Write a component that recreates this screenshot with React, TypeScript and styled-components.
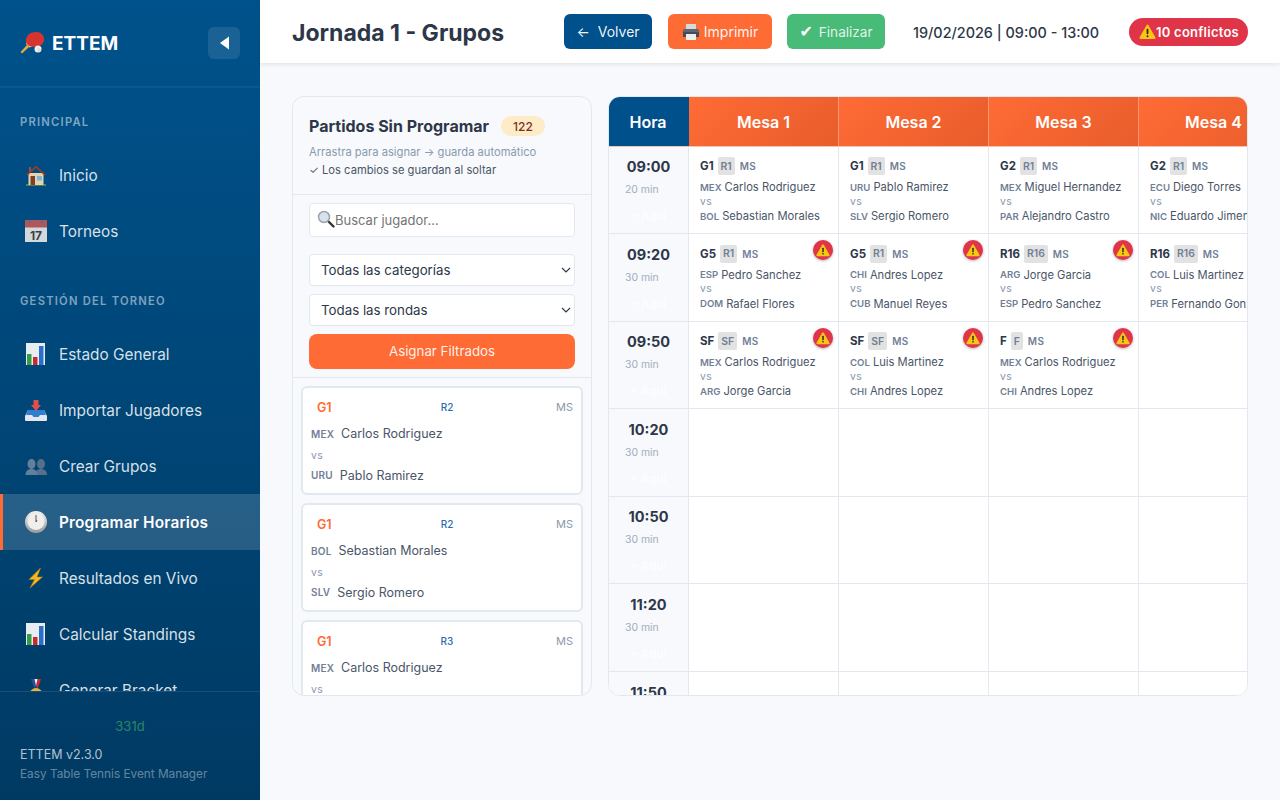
import React from 'react';
import styled, { createGlobalStyle } from 'styled-components';

const GlobalStyle = createGlobalStyle`
  * { box-sizing: border-box; }
  html, body { margin: 0; padding: 0; height: 100%; }
  body { font-family: Inter, "Liberation Sans", sans-serif; background: #f7f9fc; overflow: hidden; }
`;

const Layout = styled.div`
  display: flex;
  width: 1280px;
  height: 800px;
  overflow: hidden;
`;

const Sidebar = styled.aside`
  width: 260px;
  flex-shrink: 0;
  height: 800px;
  display: flex;
  flex-direction: column;
  background: linear-gradient(180deg, #00528c 0%, #003a63 100%);
`;
const SideHead = styled.div`
  height: 88px;
  flex-shrink: 0;
  display: flex;
  align-items: center;
  justify-content: space-between;
  padding: 0 20px;
  border-bottom: 2px solid rgba(255, 255, 255, 0.05);
`;
const Brand = styled.div`
  display: flex;
  align-items: center;
  gap: 6px;
  color: #fff;
  font-size: 19px;
  font-weight: 700;
`;
const Collapse = styled.button`
  width: 32px;
  height: 32px;
  border: 0;
  border-radius: 6px;
  background: rgba(255, 255, 255, 0.1);
  display: flex;
  align-items: center;
  justify-content: center;
  padding: 0;
`;
const Nav = styled.nav`
  flex: 1;
  overflow: hidden;
  padding-top: 25px;
`;
const SectionLabel = styled.div<{ $gap?: number }>`
  height: 19px;
  line-height: 19px;
  margin-top: ${(p) => p.$gap ?? 0}px;
  margin-bottom: 15px;
  padding-left: 20px;
  color: rgba(255, 255, 255, 0.5);
  font-size: 11.2px;
  font-weight: 600;
  letter-spacing: 1.24px;
`;
const NavItem = styled.div<{ $active?: boolean }>`
  height: 56px;
  display: flex;
  align-items: center;
  padding-left: ${(p) => (p.$active ? 22 : 25)}px;
  border-left: ${(p) => (p.$active ? '3px solid #ff6b35' : '0')};
  background: ${(p) => (p.$active ? 'rgba(255,255,255,0.15)' : 'transparent')};
  color: ${(p) => (p.$active ? '#fff' : 'rgba(255,255,255,0.85)')};
  font-size: 15.36px;
  font-weight: ${(p) => (p.$active ? 600 : 400)};
  letter-spacing: ${(p) => (p.$active ? '0.2px' : '0')};
`;
const NavIcon = styled.span`
  width: 34px;
  flex-shrink: 0;
  display: flex;
`;
const SideFoot = styled.div`
  height: 109px;
  flex-shrink: 0;
  padding: 26px 20px 0;
  border-top: 1px solid rgba(255, 255, 255, 0.1);
`;
const DaysLeft = styled.div`
  text-align: center;
  color: #38a169;
  opacity: 0.75;
  font-size: 13px;
  line-height: 16px;
  margin-bottom: 13px;
`;
const Version = styled.div`
  color: rgba(255, 255, 255, 0.7);
  font-size: 12.5px;
  line-height: 16px;
  margin-bottom: 3px;
`;
const Tagline = styled.div`
  color: rgba(255, 255, 255, 0.4);
  font-size: 11.8px;
  line-height: 16px;
`;

const Main = styled.main`
  flex: 1;
  min-width: 0;
  display: flex;
  flex-direction: column;
`;
const TopBar = styled.header`
  height: 63px;
  flex-shrink: 0;
  display: flex;
  align-items: center;
  padding: 0 32px;
  background: #fff;
  box-shadow: 0 2px 4px rgba(0, 0, 0, 0.08);
`;
const Title = styled.h1`
  margin: 2px 0 0;
  width: 272px;
  flex-shrink: 0;
  color: #2d3748;
  font-size: 23px;
  font-weight: 700;
`;
const ActionButton = styled.button<{ $bg: string; $gap: number; $width: number; $after: number; $dim?: boolean }>`
  width: ${(p) => p.$width}px;
  height: 35px;
  flex-shrink: 0;
  margin-right: ${(p) => p.$after}px;
  padding: 0;
  display: flex;
  align-items: center;
  justify-content: center;
  gap: ${(p) => p.$gap}px;
  border: 0;
  border-radius: 6px;
  background: ${(p) => p.$bg};
  color: rgba(255, 255, 255, ${(p) => (p.$dim ? 0.85 : 0.95)});
  font-family: inherit;
  font-size: ${(p) => (p.$dim ? 13.6 : 14)}px;
  font-weight: 400;
  white-space: nowrap;
`;
const CheckMark = styled.span`
  color: #fff;
  font-family: "DejaVu Sans", sans-serif;
  font-size: 16px;
`;
const DateText = styled.div`
  width: 187px;
  flex-shrink: 0;
  margin-left: 12px;
  margin-right: 29px;
  margin-top: 1px;
  color: #2d3748;
  font-size: 14.4px;
  font-weight: 500;
  white-space: nowrap;
`;
const ConflictBadge = styled.div`
  width: 119px;
  height: 28px;
  flex-shrink: 0;
  padding: 0 0 0 10px;
  display: flex;
  align-items: center;
  border-radius: 14px;
  background: #e03448;
  color: #fff;
  font-size: 13px;
  font-weight: 600;
  letter-spacing: 0.25px;
  white-space: nowrap;
`;

const Content = styled.div`
  flex: 1;
  display: flex;
  gap: 16px;
  padding: 33px 32px 0;
`;

const Panel = styled.section`
  width: 300px;
  height: 600px;
  flex-shrink: 0;
  display: flex;
  flex-direction: column;
  overflow: hidden;
  background: #f7f9fc;
  border: 1px solid #e2e8f0;
  border-radius: 12px;
`;
const PanelHead = styled.div`
  height: 98px;
  flex-shrink: 0;
  padding: 19px 16px 0;
  border-bottom: 1px solid #e2e8f0;
`;
const PanelTitleRow = styled.div`
  display: flex;
  align-items: center;
  gap: 12px;
  height: 20px;
  margin-bottom: 7px;
`;
const PanelTitle = styled.div`
  color: #2d3748;
  font-size: 16px;
  font-weight: 700;
`;
const CountPill = styled.span`
  height: 20px;
  padding: 0 12px;
  display: flex;
  align-items: center;
  border-radius: 10px;
  background: #feebc8;
  color: #7b341e;
  font-size: 12px;
  font-weight: 500;
`;
const Hint = styled.div<{ $dark?: boolean }>`
  color: ${(p) => (p.$dark ? '#4a5568' : '#8a99ae')};
  font-size: 11.2px;
  line-height: 18px;
`;
const Filters = styled.div`
  height: 183px;
  flex-shrink: 0;
  display: flex;
  flex-direction: column;
  padding: 8px 16px 0;
  border-bottom: 1px solid #e2e8f0;
`;
const SearchBox = styled.div`
  position: relative;
  height: 34px;
  margin-bottom: 17px;
`;
const SearchInput = styled.input`
  width: 100%;
  height: 100%;
  padding: 0 8px 0 25px;
  background: #fff;
  border: 1px solid #e2e8f0;
  border-radius: 4px;
  font-family: inherit;
  font-size: 13px;
  color: #2d3748;
  outline: none;
  &::placeholder { color: #757575; }
`;
const SearchGlyph = styled.span`
  position: absolute;
  left: 8px;
  top: 7px;
  display: flex;
`;
const FilterSelect = styled.select`
  width: 100%;
  height: 32px;
  margin-bottom: 8px;
  padding: 0 20px 0 11px;
  appearance: none;
  background: #fff url("data:image/svg+xml,%3Csvg xmlns='http://www.w3.org/2000/svg' width='10' height='6'%3E%3Cpath d='M1 1l4 4 4-4' fill='none' stroke='%232d3748' stroke-width='1.1'/%3E%3C/svg%3E") no-repeat right 3.500px center;
  border: 1px solid #e2e8f0;
  border-radius: 4px;
  color: #2d3748;
  font-family: inherit;
  font-size: 13.3px;
`;
const AssignButton = styled.button`
  height: 35px;
  padding: 0 0 2px;
  border: 0;
  border-radius: 8px;
  background: #ff6b35;
  color: rgba(255, 255, 255, 0.92);
  font-family: inherit;
  font-size: 13.3px;
`;
const MatchList = styled.div`
  flex: 1;
  overflow: hidden;
  padding: 8px 8px 0;
  display: flex;
  flex-direction: column;
  gap: 8px;
`;
const MatchCard = styled.article`
  height: 109px;
  flex-shrink: 0;
  padding: 10px 8px 0;
  background: #fff;
  border: 2px solid #e2e8f0;
  border-radius: 6px;
`;
const CardTop = styled.div`
  display: grid;
  grid-template-columns: 1fr 1fr 1fr;
  align-items: center;
  height: 18px;
  margin-bottom: 8.500px;
`;
const CardGroup = styled.span`
  padding-left: 6px;
  color: #ff6b35;
  font-size: 12.5px;
  font-weight: 600;
`;
const CardRound = styled.span`
  padding-left: 10px;
  text-align: center;
  color: #2b6cb0;
  font-size: 10px;
  font-weight: 500;
`;
const CardCat = styled.span`
  text-align: right;
  color: #8a99ae;
  font-size: 11px;
`;
const CardPlayer = styled.div`
  display: flex;
  align-items: center;
  gap: 7px;
  height: 18px;
  color: #4a5568;
  font-size: 12.48px;
`;
const CardVs = styled.div`
  height: 14px;
  line-height: 14px;
  margin: 6px 0 3.500px;
  color: #8a99ae;
  font-size: 10.4px;
  letter-spacing: 0.5px;
`;
const Code = styled.span`
  color: #718096;
  font-size: 10px;
  font-weight: 600;
  letter-spacing: 0.2px;
`;
const SlotCode = styled(Code)`
  font-size: 9.6px;
  letter-spacing: 0;
`;

const Board = styled.section`
  width: 640px;
  height: 600px;
  flex-shrink: 0;
  overflow: hidden;
  background: #fff;
  border: 1px solid #e2e8f0;
  border-radius: 12px;
`;
const BoardGrid = styled.div`
  display: grid;
  grid-template-columns: 80px repeat(4, 150px);
  grid-auto-rows: 87.600px;
  width: 680px;
`;
const HeadRow = styled.div`
  display: grid;
  grid-template-columns: 80px repeat(4, 150px);
  width: 680px;
  height: 49.500px;
  border-bottom: 1px solid #f4c4ae;
`;
const HoraHead = styled.div`
  display: flex;
  align-items: center;
  justify-content: center;
  padding: 1px 2px 0 0;
  background: #00508c;
  color: #fff;
  font-size: 16px;
  font-weight: 600;
`;
const MesaHead = styled.div`
  display: flex;
  align-items: center;
  justify-content: center;
  padding-top: 1px;
  background: linear-gradient(135deg, #ff6b35 0%, #e85d2c 100%);
  border-right: 1px solid rgba(255, 255, 255, 0.3);
  color: #fff;
  font-size: 16px;
  font-weight: 600;
`;
const TimeCell = styled.div`
  padding: 11.500px 0 0;
  background: #f7f9fc;
  border-right: 1px solid #e2e8f0;
  border-bottom: 1px solid #e2e8f0;
  overflow: hidden;
`;
const TimeText = styled.div`
  text-align: center;
  color: #2d3748;
  font-size: 14.5px;
  font-weight: 700;
  line-height: 18px;
`;
const TimeLength = styled.div`
  padding-left: 16px;
  margin-top: 7px;
  color: #a0aec0;
  font-size: 10.4px;
  line-height: 14px;
`;
const DropHere = styled.div`
  text-align: center;
  margin-top: 12px;
  color: rgba(255, 255, 255, 0.8);
  font-size: 11.5px;
  font-weight: 600;
  line-height: 14px;
`;
const SlotCell = styled.div`
  position: relative;
  padding: 10.500px 0 0 11px;
  background: #fff;
  border-right: 1px solid #e2e8f0;
  border-bottom: 1px solid #e2e8f0;
  white-space: nowrap;
  overflow: hidden;
`;
const SlotTop = styled.div`
  display: flex;
  align-items: center;
  gap: 4px;
  height: 18px;
  margin-bottom: 4.800px;
`;
const SlotGroup = styled.span`
  color: #2d3748;
  font-size: 11.5px;
  font-weight: 700;
`;
const SlotRound = styled.span`
  height: 18px;
  padding: 0 3px;
  display: flex;
  align-items: center;
  border-radius: 2px;
  background: #e2e2e2;
  color: #718096;
  font-size: 10.4px;
  font-weight: 600;
`;
const SlotCat = styled.span`
  color: #718096;
  font-size: 10px;
  font-weight: 600;
  letter-spacing: 0.3px;
  margin-left: 1px;
`;
const SlotPlayer = styled.div`
  display: flex;
  align-items: center;
  gap: 3px;
  height: 15px;
  color: #4a5568;
  font-size: 11.2px;
`;
const SlotVs = styled.div`
  height: 14px;
  line-height: 14px;
  color: #8a99ae;
  font-size: 10.4px;
  letter-spacing: 0.5px;
`;
const WarnDot = styled.span`
  position: absolute;
  top: 6px;
  right: 5.500px;
  width: 20px;
  height: 20px;
  display: flex;
  align-items: center;
  justify-content: center;
  border-radius: 50%;
  background: #e03448;
  box-shadow: 0 1px 3px rgba(0, 0, 0, 0.3);
`;

const Paddle = () => (
  <svg width="26" height="26" viewBox="0 0 26 26">
    <path d="M0.500 22l1.500 1.500 7-6.500-2-2z" fill="#e9a93f" />
    <path d="M6 14l3.500 3.500 3-1-5.500-5.500z" fill="#f0c987" />
    <path d="M6 12C5 6 10 2 16 2c5 0 8.500 3 8 8-.5 4-4 7-9 7-4 0-7-1-8-3z" fill="#d8342f" />
    <circle cx="18" cy="19" r="3.500" fill="#f3f1ee" />
    <circle cx="19" cy="20" r="2" fill="#cfcac4" opacity=".5" />
  </svg>
);
const House = () => (
  <svg width="22" height="22" viewBox="0 0 22 22">
    <path d="M1 21h20" stroke="#5c9a45" strokeWidth="1.500" />
    <rect x="3.500" y="9" width="15" height="12" fill="#e8d3ad" />
    <path d="M11 1.500L1 10.500l1.500 1L11 4l8.500 7.500 1.500-1z" fill="#8f3b2e" />
    <path d="M11 2.500l-5 4.500V3H4v5l7-5 7 6.500z" fill="#a54a38" />
    <rect x="5.500" y="12" width="4.500" height="9" fill="#7a4229" />
    <rect x="12" y="12" width="5" height="4.500" fill="#79b6d8" />
  </svg>
);
const Calendar = () => (
  <svg width="22" height="22" viewBox="0 0 22 22">
    <rect x="0" y="0" width="22" height="22" fill="#d3d8dc" />
    <rect x="0" y="0" width="22" height="7.500" fill="#b0575c" />
    <rect x="4" y="0" width="1.500" height="3" fill="#4b6f93" />
    <rect x="16" y="0" width="1.500" height="3" fill="#4b6f93" />
    <text x="11" y="19.500" textAnchor="middle" fontSize="12" fontWeight="700" fill="#3b3f44" fontFamily="Inter, sans-serif">17</text>
  </svg>
);
const Chart = () => (
  <svg width="22" height="22" viewBox="0 0 22 22">
    <rect x="1" y="0" width="19" height="22" fill="#e8edf2" />
    <rect x="2" y="11" width="4.500" height="11" fill="#2f9e44" />
    <rect x="8" y="14" width="4.500" height="8" fill="#c92a2a" />
    <rect x="14" y="3" width="4.500" height="19" fill="#2a6fc9" />
  </svg>
);
const Inbox = () => (
  <svg width="22" height="22" viewBox="0 0 22 22">
    <path d="M3 11h16l3 6v4a1 1 0 0 1-1 1H1a1 1 0 0 1-1-1v-4z" fill="#e3e8ee" />
    <path d="M3 11h16l2 5h-6l-1.500 2h-5L7 16H1z" fill="#2f7fd1" />
    <path d="M8.500 1h5v5H16l-5 6-5-6h2.500z" fill="#e0504a" />
  </svg>
);
const People = () => (
  <svg width="22" height="22" viewBox="0 0 22 22">
    <ellipse cx="16" cy="9" rx="4" ry="5" fill="#567089" />
    <path d="M10 20c0-4 2.500-6 6-6s6 2 6 6z" fill="#567089" />
    <ellipse cx="6.500" cy="9" rx="4" ry="5" fill="#63809b" />
    <path d="M0.500 20c0-4 2.500-6 6-6s6 2 6 6z" fill="#63809b" />
  </svg>
);
const Clock = () => (
  <svg width="22" height="22" viewBox="0 0 22 22">
    <defs>
      <linearGradient id="clockRim" x1="0" y1="0" x2="0" y2="1">
        <stop offset="0" stopColor="#f2f2f2" />
        <stop offset="1" stopColor="#9a9a9a" />
      </linearGradient>
    </defs>
    <circle cx="11" cy="11" r="11" fill="url(#clockRim)" />
    <circle cx="11" cy="10.500" r="8.500" fill="#f1efec" />
    <path d="M11 11V4M11 11l1-2" stroke="#555" strokeWidth="1" />
  </svg>
);
const Bolt = () => (
  <svg width="22" height="22" viewBox="0 0 22 22">
    <path d="M15.500 1L4 12.500h5.500L5 21l12.500-11H12z" fill="#f5b820" stroke="#b97a10" strokeWidth=".6" />
  </svg>
);
const Medal = () => (
  <svg width="22" height="22" viewBox="0 0 22 22">
    <path d="M6 0h3.500L11 7 9.500 10z" fill="#2b4c9b" />
    <path d="M16 0h-3.500L11 7l1.500 3z" fill="#c92a2a" />
    <path d="M9.500 0h3L11 7z" fill="#f1f1f1" />
    <circle cx="11" cy="15.500" r="6.500" fill="#e5b53a" />
  </svg>
);
const Printer = () => (
  <svg width="18" height="18" viewBox="0 0 18 18">
    <rect x="4" y="1" width="10" height="6" fill="#d6dadd" />
    <rect x="1" y="6" width="16" height="8" rx="1.500" fill="#5d6770" />
    <rect x="1" y="9" width="16" height="5" fill="#444c54" />
    <rect x="4" y="11" width="10" height="6" fill="#eceff1" />
  </svg>
);
const Warning = ({ size }: { size: number }) => (
  <svg width={size} height={size} viewBox="0 0 16 16">
    <path d="M8 1.500a1 1 0 0 1 .9.5l6.500 11.500a1 1 0 0 1-.9 1.500H1.500a1 1 0 0 1-.9-1.500L7.100 2a1 1 0 0 1 .9-.5z" fill="#fbc513" />
    <rect x="7.200" y="5.500" width="1.600" height="5" rx=".6" fill="#222" />
    <circle cx="8" cy="12.400" r=".9" fill="#222" />
  </svg>
);
const Magnifier = () => (
  <svg width="18" height="18" viewBox="0 0 18 18">
    <path d="M10.500 10.500l6 6" stroke="#333" strokeWidth="2.400" strokeLinecap="round" />
    <circle cx="7" cy="7" r="5.500" fill="#d7e3ec" stroke="#9aa3ab" strokeWidth="1.500" />
  </svg>
);

type Slot = { g: string; r: string; a: [string, string]; b: [string, string]; warn?: boolean };

const rows: { time: string; mins: number; slots: (Slot | null)[] }[] = [
  {
    time: '09:00',
    mins: 20,
    slots: [
      { g: 'G1', r: 'R1', a: ['MEX', 'Carlos Rodriguez'], b: ['BOL', 'Sebastian Morales'] },
      { g: 'G1', r: 'R1', a: ['URU', 'Pablo Ramirez'], b: ['SLV', 'Sergio Romero'] },
      { g: 'G2', r: 'R1', a: ['MEX', 'Miguel Hernandez'], b: ['PAR', 'Alejandro Castro'] },
      { g: 'G2', r: 'R1', a: ['ECU', 'Diego Torres'], b: ['NIC', 'Eduardo Jimenez'] },
    ],
  },
  {
    time: '09:20',
    mins: 30,
    slots: [
      { g: 'G5', r: 'R1', a: ['ESP', 'Pedro Sanchez'], b: ['DOM', 'Rafael Flores'], warn: true },
      { g: 'G5', r: 'R1', a: ['CHI', 'Andres Lopez'], b: ['CUB', 'Manuel Reyes'], warn: true },
      { g: 'R16', r: 'R16', a: ['ARG', 'Jorge Garcia'], b: ['ESP', 'Pedro Sanchez'], warn: true },
      { g: 'R16', r: 'R16', a: ['COL', 'Luis Martinez'], b: ['PER', 'Fernando Gonzalez'] },
    ],
  },
  {
    time: '09:50',
    mins: 30,
    slots: [
      { g: 'SF', r: 'SF', a: ['MEX', 'Carlos Rodriguez'], b: ['ARG', 'Jorge Garcia'], warn: true },
      { g: 'SF', r: 'SF', a: ['COL', 'Luis Martinez'], b: ['CHI', 'Andres Lopez'], warn: true },
      { g: 'F', r: 'F', a: ['MEX', 'Carlos Rodriguez'], b: ['CHI', 'Andres Lopez'], warn: true },
      null,
    ],
  },
  { time: '10:20', mins: 30, slots: [null, null, null, null] },
  { time: '10:50', mins: 30, slots: [null, null, null, null] },
  { time: '11:20', mins: 30, slots: [null, null, null, null] },
  { time: '11:50', mins: 30, slots: [null, null, null, null] },
];

const pending = [
  { g: 'G1', r: 'R2', a: ['MEX', 'Carlos Rodriguez'], b: ['URU', 'Pablo Ramirez'] },
  { g: 'G1', r: 'R2', a: ['BOL', 'Sebastian Morales'], b: ['SLV', 'Sergio Romero'] },
  { g: 'G1', r: 'R3', a: ['MEX', 'Carlos Rodriguez'], b: ['PAR', 'Alejandro Castro'] },
];

const App = () => (
  <Layout>
    <GlobalStyle />
    <Sidebar>
      <SideHead>
        <Brand>
          <Paddle />
          ETTEM
        </Brand>
        <Collapse>
          <svg width="9" height="14" viewBox="0 0 9 14">
            <path d="M9 0.500v13L0 7z" fill="#fff" />
          </svg>
        </Collapse>
      </SideHead>
      <Nav>
        <SectionLabel>PRINCIPAL</SectionLabel>
        <NavItem><NavIcon><House /></NavIcon>Inicio</NavItem>
        <NavItem><NavIcon><Calendar /></NavIcon>Torneos</NavItem>
        <SectionLabel $gap={33}>GESTIÓN DEL TORNEO</SectionLabel>
        <NavItem><NavIcon><Chart /></NavIcon>Estado General</NavItem>
        <NavItem><NavIcon><Inbox /></NavIcon>Importar Jugadores</NavItem>
        <NavItem><NavIcon><People /></NavIcon>Crear Grupos</NavItem>
        <NavItem $active><NavIcon><Clock /></NavIcon>Programar Horarios</NavItem>
        <NavItem><NavIcon><Bolt /></NavIcon>Resultados en Vivo</NavItem>
        <NavItem><NavIcon><Chart /></NavIcon>Calcular Standings</NavItem>
        <NavItem><NavIcon><Medal /></NavIcon>Generar Bracket</NavItem>
      </Nav>
      <SideFoot>
        <DaysLeft>331d</DaysLeft>
        <Version>ETTEM v2.3.0</Version>
        <Tagline>Easy Table Tennis Event Manager</Tagline>
      </SideFoot>
    </Sidebar>
    <Main>
      <TopBar>
        <Title>Jornada 1 - Grupos</Title>
        <ActionButton $bg="#00508c" $gap={8} $width={88} $after={16}><span>←</span><span>Volver</span></ActionButton>
        <ActionButton $bg="#ff6b35" $gap={4} $width={104} $after={15}><Printer />Imprimir</ActionButton>
        <ActionButton $bg="#48bb78" $gap={6} $width={98} $after={16} $dim><CheckMark>✔</CheckMark>Finalizar</ActionButton>
        <DateText>19/02/2026 | 09:00 - 13:00</DateText>
        <ConflictBadge><Warning size={17} />10 conflictos</ConflictBadge>
      </TopBar>
      <Content>
        <Panel>
          <PanelHead>
            <PanelTitleRow>
              <PanelTitle>Partidos Sin Programar</PanelTitle>
              <CountPill>122</CountPill>
            </PanelTitleRow>
            <Hint>Arrastra para asignar → guarda automático</Hint>
            <Hint $dark>✓ Los cambios se guardan al soltar</Hint>
          </PanelHead>
          <Filters>
            <SearchBox>
              <SearchInput placeholder="Buscar jugador..." />
              <SearchGlyph><Magnifier /></SearchGlyph>
            </SearchBox>
            <FilterSelect>
              <option>Todas las categorías</option>
            </FilterSelect>
            <FilterSelect>
              <option>Todas las rondas</option>
            </FilterSelect>
            <AssignButton>Asignar Filtrados</AssignButton>
          </Filters>
          <MatchList>
            {pending.map((m, i) => (
              <MatchCard key={i}>
                <CardTop>
                  <CardGroup>{m.g}</CardGroup>
                  <CardRound>{m.r}</CardRound>
                  <CardCat>MS</CardCat>
                </CardTop>
                <CardPlayer><Code>{m.a[0]}</Code>{m.a[1]}</CardPlayer>
                <CardVs>vs</CardVs>
                <CardPlayer><Code>{m.b[0]}</Code>{m.b[1]}</CardPlayer>
              </MatchCard>
            ))}
          </MatchList>
        </Panel>
        <Board>
          <HeadRow>
            <HoraHead>Hora</HoraHead>
            <MesaHead>Mesa 1</MesaHead>
            <MesaHead>Mesa 2</MesaHead>
            <MesaHead>Mesa 3</MesaHead>
            <MesaHead>Mesa 4</MesaHead>
          </HeadRow>
          <BoardGrid>
            {rows.map((row) => (
              <React.Fragment key={row.time}>
                <TimeCell>
                  <TimeText>{row.time}</TimeText>
                  <TimeLength>{row.mins} min</TimeLength>
                  <DropHere>+ Aquí</DropHere>
                </TimeCell>
                {row.slots.map((s, i) => (
                  <SlotCell key={i}>
                    {s && (
                      <>
                        <SlotTop>
                          <SlotGroup>{s.g}</SlotGroup>
                          <SlotRound>{s.r}</SlotRound>
                          <SlotCat>MS</SlotCat>
                        </SlotTop>
                        <SlotPlayer><SlotCode>{s.a[0]}</SlotCode>{s.a[1]}</SlotPlayer>
                        <SlotVs>vs</SlotVs>
                        <SlotPlayer><SlotCode>{s.b[0]}</SlotCode>{s.b[1]}</SlotPlayer>
                        {s.warn && <WarnDot><Warning size={14} /></WarnDot>}
                      </>
                    )}
                  </SlotCell>
                ))}
              </React.Fragment>
            ))}
          </BoardGrid>
        </Board>
      </Content>
    </Main>
  </Layout>
);

export default App;
